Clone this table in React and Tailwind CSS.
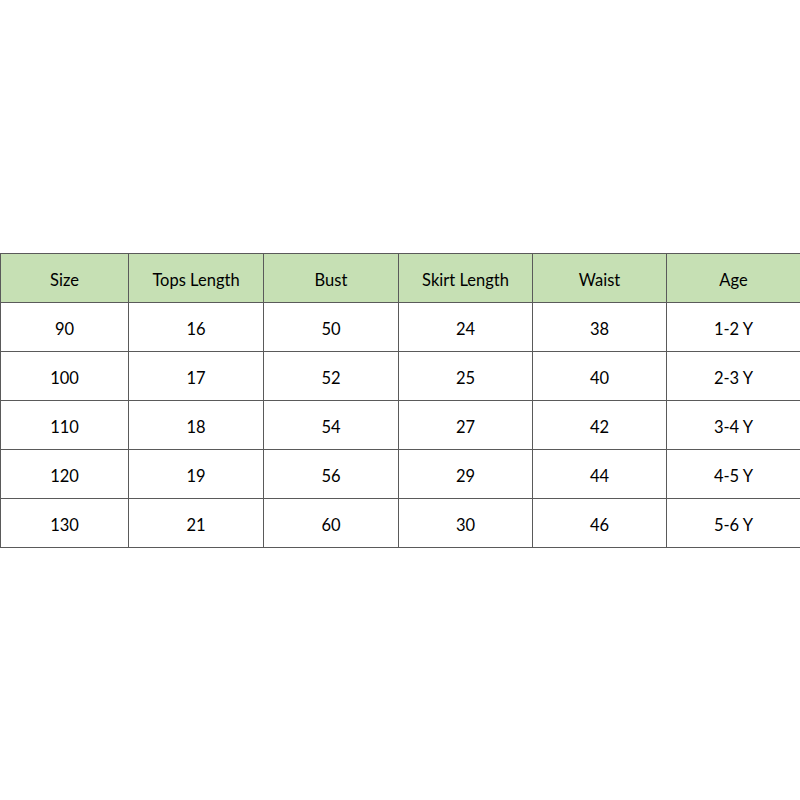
import React from 'react';

const headers = ['Size', 'Tops Length', 'Bust', 'Skirt Length', 'Waist', 'Age'];

// Tabela de medidas
const rows = [
    ['90', '16', '50', '24', '38', '1-2 Y'],
    ['100', '17', '52', '25', '40', '2-3 Y'],
    ['110', '18', '54', '27', '42', '3-4 Y'],
    ['120', '19', '56', '29', '44', '4-5 Y'],
    ['130', '21', '60', '30', '46', '5-6 Y'],
];

const widths = ['w-[128px]', 'w-[135px]', 'w-[135px]', 'w-[134px]', 'w-[134px]', 'w-[134px]'];

export default function App() {
    return (
        <div className="min-h-[800px] w-[800px] bg-white flex items-center font-['Lato',sans-serif] text-[16.5px] text-black">
            <table className="w-[800px] table-fixed border-collapse">
                <colgroup>
                    {widths.map((w, i) => (
                        <col key={i} className={w} />
                    ))}
                </colgroup>
                <thead>
                    <tr className="h-[49px] bg-[#c6e0b4]">
                        {headers.map((h) => (
                            <th key={h} className="border border-[#5a5a5a] font-normal text-center align-middle pt-[6px] pb-0">
                                {h}
                            </th>
                        ))}
                    </tr>
                </thead>
                <tbody>
                    {rows.map((r, i) => (
                        <tr key={i} className="h-[49px]">
                            {r.map((c, j) => (
                                <td key={j} className="border border-[#5a5a5a] text-center align-middle pt-[6px] pb-0">
                                    {c}
                                </td>
                            ))}
                        </tr>
                    ))}
                </tbody>
            </table>
        </div>
    );
}
